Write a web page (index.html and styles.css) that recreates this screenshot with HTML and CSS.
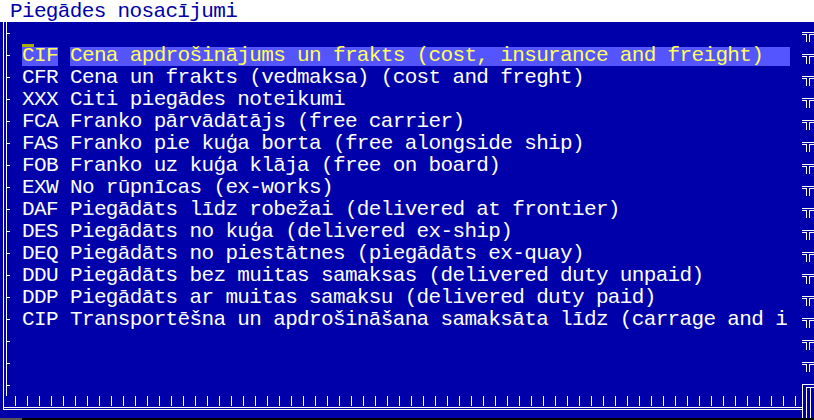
FILE: index.html
```html
<!DOCTYPE html>
<html lang="lv">
<head>
<meta charset="utf-8">
<title>Piegādes nosacījumi</title>
<link rel="stylesheet" href="styles.css">
</head>
<body>
<div class="screen">
  <div class="title">Piegādes nosacījumi</div>

  <div class="frame-left">
    <svg width="22" height="374" viewBox="0 0 22 374" shape-rendering="crispEdges">
      <g stroke="#fff" stroke-width="1">
        <path d="M3.5 0V374M6.5 0V374"/>
        <path d="M7 11.5H10M7 33.5H10M7 55.5H10M7 77.5H10M7 99.5H10M7 121.5H10M7 143.5H10M7 165.5H10M7 187.5H10M7 209.5H10M7 231.5H10M7 253.5H10M7 275.5H10M7 297.5H10M7 319.5H10M7 341.5H10M7 363.5H10"/>
      </g>
    </svg>
  </div>

  <ul class="list">
    <li class="row"></li>
    <li class="row selected"><span class="code">CIF</span><span class="desc">Cena apdrošinājums un frakts (cost, insurance and freight)</span></li>
    <li class="row"><span class="code">CFR</span><span class="desc">Cena un frakts (vedmaksa) (cost and freght)</span></li>
    <li class="row"><span class="code">XXX</span><span class="desc">Citi piegādes noteikumi</span></li>
    <li class="row"><span class="code">FCA</span><span class="desc">Franko pārvādātājs (free carrier)</span></li>
    <li class="row"><span class="code">FAS</span><span class="desc">Franko pie kuģa borta (free alongside ship)</span></li>
    <li class="row"><span class="code">FOB</span><span class="desc">Franko uz kuģa klāja (free on board)</span></li>
    <li class="row"><span class="code">EXW</span><span class="desc">No rūpnīcas (ex-works)</span></li>
    <li class="row"><span class="code">DAF</span><span class="desc">Piegādāts līdz robežai (delivered at frontier)</span></li>
    <li class="row"><span class="code">DES</span><span class="desc">Piegādāts no kuģa (delivered ex-ship)</span></li>
    <li class="row"><span class="code">DEQ</span><span class="desc">Piegādāts no piestātnes (piegādāts ex-quay)</span></li>
    <li class="row"><span class="code">DDU</span><span class="desc">Piegādāts bez muitas samaksas (delivered duty unpaid)</span></li>
    <li class="row"><span class="code">DDP</span><span class="desc">Piegādāts ar muitas samaksu (delivered duty paid)</span></li>
    <li class="row"><span class="code">CIP</span><span class="desc">Transportēšna un apdrošināšana samaksāta līdz (carrage and i</span></li>
    <li class="row"></li>
    <li class="row"></li>
    <li class="row"></li>
  </ul>

  <div class="frame-right">
    <svg width="12" height="396" viewBox="0 0 12 396" shape-rendering="crispEdges">
      <defs>
        <g id="tee" stroke="#fff" stroke-width="1">
          <path d="M0 0.5H12M0 2.5H4.5M7.5 2.5H12M4.5 2V10M7.5 2V10"/>
        </g>
      </defs>
      <use href="#tee" y="10"/>
      <use href="#tee" y="32"/>
      <use href="#tee" y="54"/>
      <use href="#tee" y="76"/>
      <use href="#tee" y="98"/>
      <use href="#tee" y="120"/>
      <use href="#tee" y="142"/>
      <use href="#tee" y="164"/>
      <use href="#tee" y="186"/>
      <use href="#tee" y="208"/>
      <use href="#tee" y="230"/>
      <use href="#tee" y="252"/>
      <use href="#tee" y="274"/>
      <use href="#tee" y="296"/>
      <use href="#tee" y="318"/>
      <use href="#tee" y="340"/>
      <g stroke="#fff" stroke-width="1">
        <path d="M0 362.5H12M4 365.5H12M0.5 363V396M4.5 366V396M8.5 366V396"/>
      </g>
    </svg>
  </div>

  <div class="frame-bottom">
    <svg width="802" height="22" viewBox="0 0 802 22" shape-rendering="crispEdges">
      <g stroke="#fff" stroke-width="1">
        <path d="M3.5 0V14M3 11.5H802M3 13.5H802"/>
        <path id="ticks" d="M15.5 0V10M27.5 0V10M39.5 0V10M51.5 0V10M63.5 0V10M75.5 0V10M87.5 0V10M99.5 0V10M111.5 0V10M123.5 0V10M135.5 0V10M147.5 0V10M159.5 0V10M171.5 0V10M183.5 0V10M195.5 0V10M207.5 0V10M219.5 0V10M231.5 0V10M243.5 0V10M255.5 0V10M267.5 0V10M279.5 0V10M291.5 0V10M303.5 0V10M315.5 0V10M327.5 0V10M339.5 0V10M351.5 0V10M363.5 0V10M375.5 0V10M387.5 0V10M399.5 0V10"/>
        <use href="#ticks" x="396"/>
      </g>
    </svg>
  </div>

  <div class="status">
    <span class="status-key"></span>
    <span class="status-rest"></span>
  </div>
</div>
</body>
</html>
```

FILE: styles.css
```css
* {
  box-sizing: border-box;
}

html, body {
  margin: 0;
  padding: 0;
  background: #0000aa;
}

body {
  width: 814px;
  height: 420px;
  overflow: hidden;
  font-family: "Liberation Mono", "Courier New", monospace;
  font-size: 21px;
  letter-spacing: -0.65px;
  color: #ffffff;
}

.screen {
  display: grid;
  grid-template-columns: 22px 768px 12px 12px;
  grid-template-rows: 22px 374px 22px 2px;
  width: 814px;
  height: 420px;
  background: #0000aa;
}

.title {
  grid-column: 1 / -1;
  grid-row: 1;
  background: #ffffff;
  color: #0000aa;
  padding: 1px 0 0 10px;
  line-height: 21px;
  white-space: pre;
}

.frame-left {
  grid-column: 1;
  grid-row: 2;
}

.frame-right {
  grid-column: 4;
  grid-row: 2 / 4;
}

.frame-bottom {
  grid-column: 1 / 4;
  grid-row: 3;
}

svg {
  display: block;
}

.list {
  grid-column: 2;
  grid-row: 2;
  list-style: none;
  margin: 0;
  padding: 0;
  overflow: hidden;
}

.row {
  display: flex;
  height: 22px;
  padding-top: 1px;
  line-height: 21px;
  white-space: pre;
  gap: 12px;
}

.code {
  width: 36px;
  flex: none;
}

.desc {
  flex: 1;
  overflow: hidden;
}

.selected {
  color: #ffff55;
  padding-top: 0;
}

.selected .code,
.selected .desc {
  padding-top: 1px;
  background: linear-gradient(to bottom, transparent 0, transparent 3px, #5555ff 3px) no-repeat;
}

.selected .code {
  background:
    linear-gradient(#aaaa00, #aaaa00) no-repeat 0 0 / 12px 3px,
    linear-gradient(to bottom, transparent 0, transparent 3px, #5555ff 3px) no-repeat;
}

.status {
  grid-column: 1 / -1;
  grid-row: 4;
  display: flex;
}

.status-key {
  width: 22px;
  background: #555555;
}

.status-rest {
  flex: 1;
  background: #000000;
}
```
